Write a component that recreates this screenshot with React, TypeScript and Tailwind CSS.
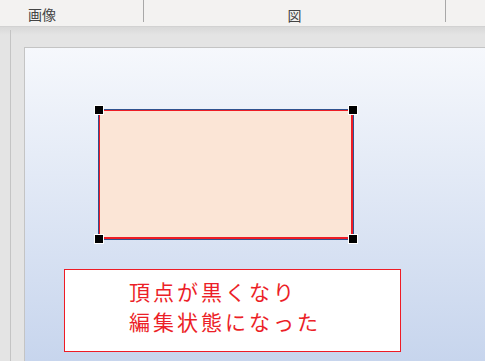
import React from 'react';

const jp = { fontFamily: '"Noto Sans CJK JP", "Noto Sans", sans-serif' };

// black selection handle centred on a corner
function Handle({ className }: { className: string }) {
  return <div className={`absolute w-[10px] h-[10px] bg-black border border-white ${className}`} />;
}

export default function App() {
  return (
    <div className="w-[485px] h-[361px] overflow-hidden bg-[#e4e4e4] flex flex-col" style={jp}>
      {/* Ribbon group labels */}
      <div className="h-[27px] shrink-0 bg-[#f3f2f1] border-b border-[#d2d2d2] flex text-[14px] text-[#444]">
        <div className="w-[144px] border-r border-[#a8a8a8] h-[22px] pl-[28px] pt-[6px] leading-[16px]">画像</div>
        <div className="w-[302px] border-r border-[#a8a8a8] h-[22px] flex justify-center pt-[7px] leading-[16px]">図</div>
        <div className="flex-1" />
      </div>

      {/* Editing area */}
      <div className="flex-1 flex bg-gradient-to-b from-[#d9d9d9] to-[#e4e4e4] bg-[length:100%_8px] bg-no-repeat">
        <div className="w-[10px] shrink-0" />
        <div className="w-[1px] mt-[3px] bg-[#c4c4c4] shrink-0" />
        <div className="w-[13px] shrink-0" />
        <div className="flex-1 flex flex-col">
          <div className="h-[20px] shrink-0" />
          {/* Slide */}
          <div className="relative flex-1 border-t border-l border-[#c4c4c4] bg-gradient-to-b from-[#f6f8fc] to-[#c7d5ed]">
            {/* Selected rectangle */}
            <div className="absolute left-[73px] top-[61px] w-[256px] h-[131px] border border-[#2f528f]">
              <div className="w-full h-full bg-[#fbe5d6] border-t border-r-2 border-b-2 border-l border-[#ee1c25]" />
              <Handle className="-left-[5px] -top-[5px]" />
              <Handle className="-right-[5px] -top-[5px]" />
              <Handle className="-left-[5px] -bottom-[5px]" />
              <Handle className="-right-[5px] -bottom-[5px]" />
            </div>

            {/* Callout text box */}
            <div className="absolute left-[39px] top-[221px] w-[337px] h-[83px] bg-white border border-[#ee1c25] pl-[64px] pt-[6px] text-[21px] leading-[30px] tracking-[3px] text-[#ec1f28]">
              <div>頂点が黒くなり</div>
              <div>編集状態になった</div>
            </div>
          </div>
        </div>
      </div>
    </div>
  );
}
